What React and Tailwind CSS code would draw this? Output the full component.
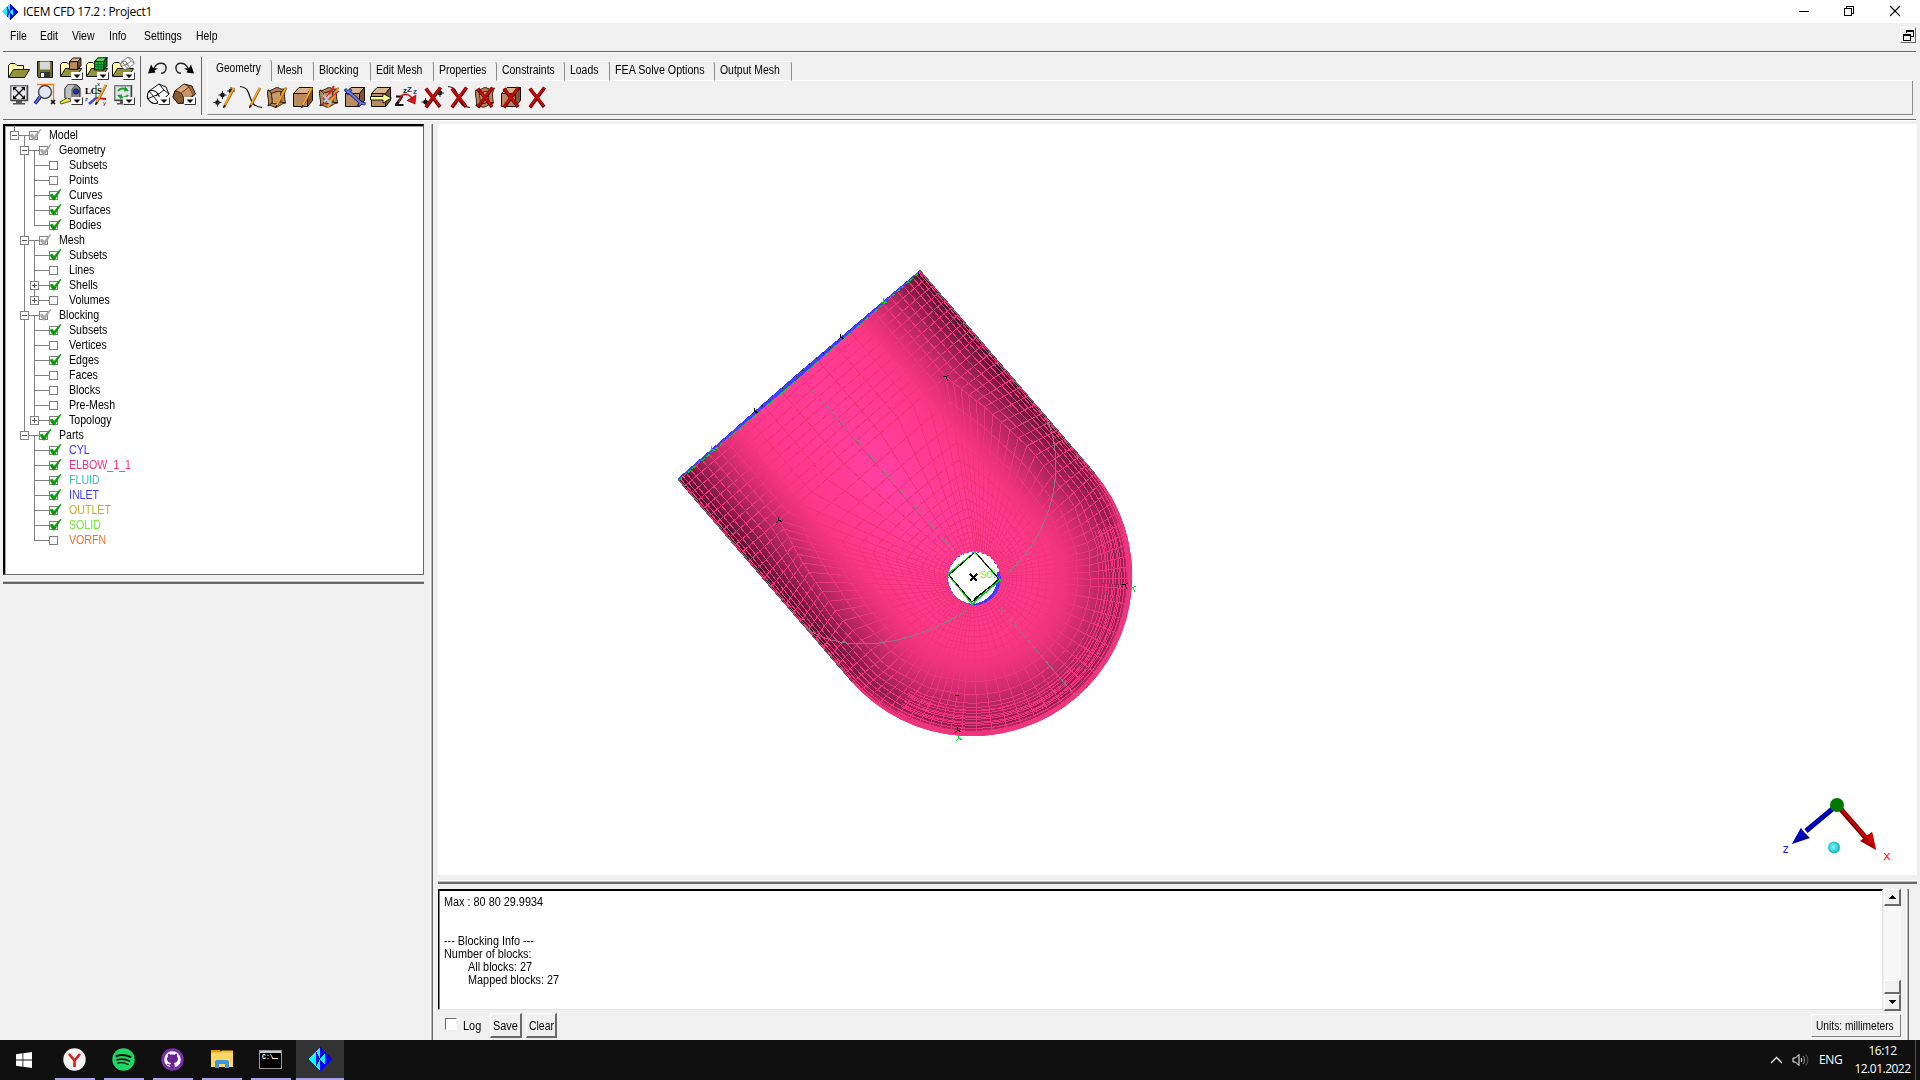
import React from "react";

/* ---------- shared bits ---------- */

function T({ children, className = "", s = "scale-x-[0.87]" }) {
  return (
    <span
      className={
        "block w-fit origin-left whitespace-pre font-['Liberation_Sans',sans-serif] text-[12px] leading-[15px] " +
        s +
        " " +
        className
      }
    >
      {children}
    </span>
  );
}

function Logo({ size }) {
  return (
    <svg width={size} height={size} viewBox="-12 -12 24 24" shapeRendering="crispEdges">
      <polygon points="-12,0 0,-12 12,0 0,12" fill="#0000ff" />
      <polygon points="-12,0 -4,-8 -4,8" fill="#00ffff" />
      <polygon points="-4,-8 0,-12 0,0" fill="#00ffff" />
      <polygon points="-4,8 0,0 0,12" fill="#00ffff" />
      <polygon points="-4,-5 0,0 -4,5" fill="#0018ff" />
      <polygon points="0,0 5,-6 5,6" fill="#00ffff" />
      <polygon points="0,-12 4,-8 0,0" fill="#0000ff" />
      <polygon points="0,12 4,8 0,0" fill="#0000ff" />
    </svg>
  );
}

/* ---------- toolbar icons (24 x 24) ---------- */

const K = "#111";
const Drop = () => (
  <g>
    <rect x="12.5" y="15.500" width="11" height="7" fill="#fff" />
    <path d="M12.500 23V15.500H23.500" stroke="#fff" fill="none" />
    <path d="M12.500 22.500H23.500V15.500" stroke="#333" fill="none" />
    <path d="M14.500 17.500H21.500L18 21Z" fill="#000" />
  </g>
);
const Folder = ({ y = 0 }) => (
  <g transform={`translate(0 ${y})`} stroke={K} strokeWidth="1">
    <path d="M1.500 19V7.500L3.500 5.500H8L10 7.500H16.500V11.500" fill="#ffffa8" />
    <path d="M1.500 19.500L6.500 11.500H22.500L17.500 19.500Z" fill="#93933a" />
  </g>
);
const Cube = ({ x = 0, y = 0, s = 1, c = "#bb8a5e", top = "#dcb48c", side = "#7e5533" }) => (
  <g transform={`translate(${x} ${y}) scale(${s})`} stroke={K} strokeWidth={1 / s}>
    <path d="M2.500 8.500H16.500V21.500H2.500Z" fill={c} />
    <path d="M2.500 8.500L8 2.500H21.500L16.500 8.500Z" fill={top} />
    <path d="M16.500 8.500L21.500 2.500V15.500L16.500 21.500Z" fill={side} />
  </g>
);
const Pencil = () => (
  <g>
    <path d="M21 3L11 22" stroke="#8a5200" strokeWidth="2.600" />
    <path d="M20.700 3L11.200 21" stroke="#f4a828" strokeWidth="1.700" />
    <path d="M12 20L10.500 23" stroke="#111" strokeWidth="1.300" />
  </g>
);
const Patch = () => (
  <g stroke="#2a1808" strokeWidth="1">
    <path d="M3 5C7 7 10 1 14 3C17 5 19 4 21.500 3C18 9 20 14 20.500 18C16 18 14 23 9 22C5 20 4 20 3 21C5 15 1 10 3 5Z" fill="#b58658" />
    <path d="M6.500 8C10 8 12 5 16 7C15 12 16 14 16 17C13 17 11 20 7 18C8 14 6 12 6.500 8Z" fill="#c99a6c" />
    <path d="M3 5L6.500 8M21 3L16 7M20.500 18L16 17M3 21L7 18" fill="none" />
  </g>
);
const Cross = () => (
  <g strokeLinecap="square">
    <path d="M6 5L18 20.500M18.500 4L6 21" stroke="#5e0000" strokeWidth="3.600" />
    <path d="M5.500 4.500L18 20M18.500 3.500L5.500 20.500" stroke="#c80808" strokeWidth="2.300" />
  </g>
);
const Wire = ({ fill = "none", line = K }) => (
  <g fill={fill} stroke={line} strokeWidth="1">
    <path d="M3 9L13 2L20 5L23 12L13 21L6 21L1 15Z" />
    <ellipse cx="7.500" cy="15" rx="5.500" ry="7" transform="rotate(-35 7.500 15)" />
    <path d="M3 9L12 20M1 17L13 12M13 2L18 8L23 12M18 8L10 14" fill="none" />
  </g>
);
const Dot = ({ x, y }) => (
  <g>
    <circle cx={x} cy={y} r="2.300" fill="#000" />
    <path d={`M${x - 4} ${y}H${x + 4}M${x} ${y - 4}V${y + 4}`} stroke="#222" strokeWidth="1" />
  </g>
);
const Monitor = () => (
  <g>
    <path d="M3.500 3.500H20.500V18.500H3.500Z" fill="#aab2bd" stroke="#777" />
    <path d="M3.500 18.500H20.500V3" stroke="#444" fill="none" strokeWidth="1.500" />
    <path d="M9 19H15V21H18V22.500H6V21H9Z" fill="#555" />
  </g>
);
const Curve = () => (
  <path d="M1 1.500C8 2 9 6 11 12C13 19 16 22 23 22.500" fill="none" stroke="#111" strokeWidth="1.200" />
);

const ICONS = {
  open: <Folder y={1} />,
  save: (
    <g>
      <path d="M4.500 4.500H19.500V20.500H5.500L4.500 19Z" fill="#6d6d2c" stroke={K} />
      <rect x="7" y="4.500" width="10" height="8" fill="#d8d8d8" />
      <rect x="7" y="15" width="10" height="6" fill="#333" />
      <rect x="8" y="16" width="3" height="4" fill="#eee" />
    </g>
  ),
  openGeo: <g><Folder /><Cube x={9} y={-0.5} s={0.6} /><Drop /></g>,
  openMesh: (
    <g>
      <Folder />
      <Cube x={8} y={-1} s={0.65} c="#18b828" top="#50e050" side="#0a7a18" />
      <path d="M13 5V13M16 5V13M10 7.500H19M10 10H19" stroke="#063" strokeWidth="0.800" />
      <Drop />
    </g>
  ),
  openBlk: <g><Folder /><g transform="translate(9 -1) scale(.62)"><Wire fill="#fff" line="#444" /></g><Drop /></g>,
  undo: (
    <g>
      <path d="M8 11C12 4 21 5 20 12C19.500 15 17 16.500 15 16" fill="none" stroke="#222" strokeWidth="1.400" />
      <path d="M2 16.500L5 7.500L7 11L12 11.500L8.500 13.500L9.500 15.500Z" fill="#000" />
    </g>
  ),
  redo: (
    <g>
      <path d="M16 11C12 4 3 5 4 12C4.500 15 7 16.500 9 16" fill="none" stroke="#222" strokeWidth="1.400" />
      <path d="M22 16.500L19 7.500L17 11L12 11.500L15.500 13.500L14.500 15.500Z" fill="#000" />
    </g>
  ),
  fit: (
    <g>
      <Monitor />
      <rect x="5" y="5" width="14" height="12" fill="#fff" opacity=".7" />
      <path d="M7 6L17 16M17 6L7 16" stroke="#000" strokeWidth="1.200" />
      <path d="M6 5H10L6 9ZM18 5H14L18 9ZM6 17H10L6 13ZM18 17H14L18 13Z" fill="#000" />
    </g>
  ),
  zoom: (
    <g>
      <path d="M4 2.500H20.500V18" fill="none" stroke="#f07818" strokeWidth="1.300" />
      <circle cx="12" cy="10" r="6.500" fill="#dfe9f4" stroke="#444" strokeWidth="1.400" />
      <path d="M7 15L2 21.500" stroke="#101080" strokeWidth="3.600" />
      <path d="M7 15L2.500 21" stroke="#5a78f0" strokeWidth="1.500" />
      <path d="M18 18L22 22M22 18L18 22" stroke="#000" strokeWidth="1.600" />
    </g>
  ),
  tape: (
    <g>
      <path d="M6 6.500L9 2.500H17L21 6V17L14 20L6 16Z" fill="#8a8a8a" stroke={K} />
      <path d="M6 6.500L9 2.500H17L13 7V17L6 16Z" fill="#c0c0c0" stroke="#555" />
      <circle cx="17" cy="9.500" r="2.600" fill="#2038c0" stroke="#112" />
      <path d="M8 16L1 20L2 22L12 19" fill="#f0e828" stroke="#333" strokeWidth=".8" />
      <Drop />
    </g>
  ),
  lcs: (
    <g>
      <path d="M11 17V3" stroke="#30a050" strokeWidth="1.500" />
      <path d="M11 16L21 17" stroke="#d01818" strokeWidth="2" />
      <path d="M11 16L4 22" stroke="#3848e0" strokeWidth="2.500" />
      <text x="0" y="12" fontSize="9" fontWeight="bold" fontFamily="Liberation Serif" fill="#000" textLength="17">LCS</text>
      <Pencil />
      <text x="0" y="19" fontSize="6" fontFamily="Liberation Sans" fill="#000">z</text>
      <text x="18" y="23" fontSize="6" fontFamily="Liberation Sans" fill="#000">y</text>
      <text x="12" y="4" fontSize="6" fontFamily="Liberation Sans" fill="#000">x</text>
    </g>
  ),
  refresh: (
    <g>
      <Monitor />
      <rect x="5" y="5" width="14" height="12" fill="#dfe6ea" />
      <path d="M7 9C9 6 13 6 15 7.500M17 13C15 16 11 16 9 14.500" stroke="#1fa02a" strokeWidth="2" fill="none" />
      <path d="M14 4.500L18 9L13 9.500ZM10 17.500L6 13L11 12.500Z" fill="#1fa02a" />
      <Drop />
    </g>
  ),
  wire: <g><Wire fill="#fff" /><Drop /></g>,
  solid: (
    <g>
      <path d="M3 9L12 2L20 4L23.500 12L13 21L6 21.500L1 15Z" fill="#a8703f" stroke={K} />
      <path d="M3 9L12 2L17 5L8 12Z" fill="#dba878" stroke="#543010" strokeWidth=".7" />
      <path d="M8 12L17 5L21 13L12 20Z" fill="#c89468" stroke="#543010" strokeWidth=".7" />
      <path d="M3 9C9 9 13 14 11 21L6 21.500L1 15Z" fill="#8a5a30" stroke={K} strokeWidth=".8" />
      <Drop />
    </g>
  ),
  gPoint: <g><Dot x={4.5} y={17.5} /><Dot x={9.5} y={10} /><Dot x={18} y={6} /><Pencil /></g>,
  gCurve: <g><Curve /><Pencil /></g>,
  gSurf: <g><Patch /><Pencil /></g>,
  gBody: <g><Cube /><Pencil /></g>,
  gFacet: (
    <g>
      <Patch />
      <path d="M21 3L11 22" stroke="#f0a020" strokeWidth="2" />
      <path d="M17 1L9 14" stroke="#d82020" strokeWidth="2" />
      <path d="M22 6L12 14L6 20" stroke="#d83030" strokeWidth="1.300" fill="none" />
      <path d="M6 10L14 19M13 10L7 17" stroke="#b8c4d8" strokeWidth="2.200" />
    </g>
  ),
  gRepair: (
    <g>
      <Cube />
      <path d="M5 6L18 18" stroke="#101850" strokeWidth="3.600" />
      <path d="M2 4L5 8L8 4M15 21L18 18L22.500 19" stroke="#101850" strokeWidth="3" fill="none" />
      <path d="M5 6L18 18" stroke="#6878f0" strokeWidth="2.200" />
      <path d="M2.500 4.500L5 7.500L7.500 4.500M16 20.500L18 18L22 19" stroke="#6878f0" strokeWidth="1.600" fill="none" />
    </g>
  ),
  gTransform: <g><Cube /><path d="M1.500 11.500H14V8.500L22.500 13L14 18V15H1.500Z" fill="#ffff90" stroke={K} /></g>,
  gRestore: (
    <g>
      <path d="M1 10.500H8V12L3.500 19H8.500V21H0V19L5 12.500H1Z" fill="#111" />
      <text x="8" y="8" fontSize="8" fontWeight="bold" fontFamily="Liberation Sans" fill="#222">z</text>
      <text x="12" y="7" fontSize="8" fontWeight="bold" fontFamily="Liberation Sans" fill="#333">Z</text>
      <text x="18" y="9" fontSize="8" fontWeight="bold" fontFamily="Liberation Sans" fill="#444">z</text>
      <path d="M4 17C5 7 13 8 17 13" fill="none" stroke="#d81818" strokeWidth="1.600" />
      <path d="M21 10L20 19L12 15.500Z" fill="#d81818" stroke="#700" strokeWidth=".6" />
    </g>
  ),
  dPoint: <g><Dot x={4.5} y={17} /><Dot x={19} y={8} /><Cross /></g>,
  dCurve: <g><Curve /><Cross /></g>,
  dSurf: <g><Patch /><Cross /></g>,
  dBody: <g><Cube /><Cross /></g>,
  dAny: <Cross />,
};

function Icon({ name }) {
  return (
    <div className="flex h-[25px] w-[26px] shrink-0 items-center justify-center">
      <svg width="24" height="24" viewBox="0 0 24 24" fill="none">
        {ICONS[name]}
      </svg>
    </div>
  );
}

const IconRow = ({ names }) => (
  <div className="flex">
    {names.map((n) => (
      <Icon key={n} name={n} />
    ))}
  </div>
);

/* ---------- title bar and menu ---------- */

function TitleBar() {
  return (
    <div className="flex h-[23px] shrink-0 items-center bg-white pl-[2px]">
      <Logo size={16} />
      <span className="ml-[5px] w-[140px] whitespace-nowrap font-['Open_Sans',sans-serif] text-[12px] leading-[20px] tracking-[-0.3px] text-black">
        ICEM CFD 17.2 : Project1
      </span>
      <svg className="ml-auto" width="140" height="22" viewBox="1780 0 140 22" fill="none" stroke="#000" shapeRendering="crispEdges">
        <path d="M1799 10.500H1809" />
        <path d="M1844.500 7.500H1851.500V14.500H1844.500ZM1846.500 7V5.500H1853.500V12.500H1852" />
        <path d="M1890 5L1900 15M1900 5L1890 15" shapeRendering="auto" strokeWidth="1.100" />
      </svg>
    </div>
  );
}

function MenuBar() {
  const items = [
    ["File", "w-[30px]"],
    ["Edit", "w-[32px]"],
    ["View", "w-[37px]"],
    ["Info", "w-[35px]"],
    ["Settings", "w-[52px]"],
    ["Help", "w-[40px]"],
  ];
  return (
    <div className="mr-[4px] ml-[3px] flex h-[30px] shrink-0 items-start border-b border-white">
      <div className="flex h-[29px] w-full items-start border-b border-[#696969] pt-[5px] pl-[7px]">
        {items.map(([t, w]) => (
          <div key={t} className={"shrink-0 pt-px " + w}>
            <T>{t}</T>
          </div>
        ))}
        <div className="-mt-[1px] ml-auto flex h-[16px] w-[16px] items-center justify-center border-t border-l border-r border-b border-t-white border-l-white border-r-[#696969] border-b-[#696969]">
          <svg width="11" height="11" fill="none" stroke="#000" shapeRendering="crispEdges">
            <path d="M3.500 3V.500H10.500V6.500H8M3.500 1.500H10.500" />
            <path d="M.500 4.500H7.500V10.500H.500ZM.500 5.500H7.500" />
          </svg>
        </div>
      </div>
    </div>
  );
}

/* ---------- toolbar ---------- */

const TABS = [
  ["Mesh", "w-[42px]"],
  ["Blocking", "w-[57px]"],
  ["Edit Mesh", "w-[63px]"],
  ["Properties", "w-[63px]"],
  ["Constraints", "w-[68px]"],
  ["Loads", "w-[45px]"],
  ["FEA Solve Options", "w-[105px]"],
  ["Output Mesh", "w-[77px]"],
];

function Toolbar() {
  return (
    <div className="mr-[4px] ml-[3px] h-[68px] shrink-0 border-b border-white">
      <div className="flex h-[67px] border-b border-[#696969]">
        <div className="mt-[3px] flex h-[51px] w-[138px] flex-col border-r border-[#696969] pl-[3px]">
          <IconRow names={["open", "save", "openGeo", "openMesh", "openBlk"]} />
          <IconRow names={["fit", "zoom", "tape", "lcs", "refresh"]} />
        </div>
        <div className="mt-[4px] flex h-[58px] w-[61px] flex-col border-r border-[#696969] pl-[4px]">
          <div className="-mt-px">
            <IconRow names={["undo", "redo"]} />
            <IconRow names={["wire", "solid"]} />
          </div>
        </div>
        <div className="mr-[3px] ml-[5px] flex flex-1 flex-col pt-[6px]">
          <div className="flex h-[22px] items-end">
            <div className="flex h-[22px] w-[65px] shrink-0 rounded-tl-[3px] rounded-tr-[4px] border-t border-r border-l border-t-white border-r-[#8a8a8a] border-l-white pt-px pl-[8px]">
              <T s="scale-x-[0.85]">Geometry</T>
            </div>
            {TABS.map(([t, w]) => (
              <div
                key={t}
                className={
                  "flex h-[20px] shrink-0 rounded-tr-[4px] border-t border-r border-b border-t-white border-r-[#8a8a8a] border-b-white pt-px pl-[5px] " + w
                }
              >
                <T s={t.length > 11 ? "scale-x-[0.89]" : "scale-x-[0.87]"}>{t}</T>
              </div>
            ))}
            <div className="h-px flex-1 bg-white" />
          </div>
          <div className="h-[34px] border-r border-b border-l border-r-[#8a8a8a] border-b-[#8a8a8a] border-l-white pt-[3px] pl-[4px]">
            <IconRow
              names={["gPoint", "gCurve", "gSurf", "gBody", "gFacet", "gRepair", "gTransform", "gRestore", "dPoint", "dCurve", "dSurf", "dBody", "dAny"]}
            />
          </div>
        </div>
      </div>
    </div>
  );
}

/* ---------- model tree ---------- */

// [depth, label, state, expander, colour]
const TREE = [
  [0, "Model", "g", "-"],
  [1, "Geometry", "g", "-"],
  [2, "Subsets", ""],
  [2, "Points", ""],
  [2, "Curves", "c"],
  [2, "Surfaces", "c"],
  [2, "Bodies", "c"],
  [1, "Mesh", "g", "-"],
  [2, "Subsets", "c"],
  [2, "Lines", ""],
  [2, "Shells", "c", "+"],
  [2, "Volumes", "", "+"],
  [1, "Blocking", "g", "-"],
  [2, "Subsets", "c"],
  [2, "Vertices", ""],
  [2, "Edges", "c"],
  [2, "Faces", ""],
  [2, "Blocks", ""],
  [2, "Pre-Mesh", ""],
  [2, "Topology", "c", "+"],
  [1, "Parts", "c", "-"],
  [2, "CYL", "c", "", "text-[#4236f5]"],
  [2, "ELBOW_1_1", "c", "", "text-[#ee2f7b]"],
  [2, "FLUID", "c", "", "text-[#2fc4b4]"],
  [2, "INLET", "c", "", "text-[#3d3df5]"],
  [2, "OUTLET", "c", "", "text-[#c8ab2c]"],
  [2, "SOLID", "c", "", "text-[#70e838]"],
  [2, "VORFN", "", "", "text-[#f07030]"],
];

const GUTTER = [43, 53, 63];

function TreeRow({ row, index }) {
  const [d, label, state, exp, color = "text-black"] = row;
  const next = TREE[index + 1];
  const cx = 8.5 + d * 10;
  const bx = d === 2 ? 43.5 : 23.5 + d * 10;
  const lines = [];
  if (d === 0) lines.push("M8.500 0V8M18.500 8V15", "M8 8.500H24");
  if (d === 1) {
    lines.push("M18.500 0V" + (label === "Parts" ? 8 : 15), "M18 8.500H34", "M28.500 8V15");
  }
  if (d === 2) {
    if (index < 20) lines.push("M18.500 0V15");
    lines.push("M28.500 0V" + (next && next[0] === 2 ? 15 : 8), "M28 8.500H43");
  }
  return (
    <div className="flex h-[15px] items-center">
      <svg className="shrink-0" width={GUTTER[d]} height="15" fill="none" shapeRendering="crispEdges" overflow="visible">
        <path d={lines.join("")} stroke="#808080" />
        {exp ? (
          <g>
            <rect x={cx - 4} y="4.500" width="8" height="8" fill="#fff" stroke="#808080" />
            <path d={`M${cx - 2.5} 8.500H${cx + 2.5}` + (exp === "+" ? `M${cx} 6V11` : "")} stroke="#555" />
          </g>
        ) : null}
        <rect x={bx} y="4.500" width="8" height="8" fill="#fff" stroke="#808080" />
        {state ? (
          <path
            transform={`translate(${bx} 0)`}
            d="M.5 8L3 7L4.500 9.500L10.500 2.500H11.500L5 13H3.500Z"
            fill={state === "c" ? "#089808" : "#a8a8a8"}
            stroke={state === "c" ? "#089808" : "#a8a8a8"}
            strokeWidth=".7"
            shapeRendering="auto"
          />
        ) : null}
      </svg>
      <T s="scale-x-[0.885]" className={"pt-[2px] " + color}>{label}</T>
    </div>
  );
}

function Sidebar() {
  return (
    <div className="flex w-[427px] shrink-0 flex-col pl-[3px]">
      <div className="h-[451px] w-[421px] border-t-2 border-r border-b border-l-2 border-t-black border-r-[#696969] border-b-[#696969] border-l-black bg-white">
        <div className="h-full border-t border-l border-[#a0a0a0]">
          {TREE.map((r, i) => (
            <TreeRow key={i} row={r} index={i} />
          ))}
        </div>
      </div>
      <div className="mt-[5px] h-[4px] w-[421px] border-t border-b-2 border-t-white border-b-[#696969] bg-[#c0c0c0]" />
    </div>
  );
}

/* ---------- viewport drawing ---------- */

const CX = 973.2, CY = 577.3, R = 160, LEN = 267, HOLE = 26;
const UX = 0.6524, UY = 0.7578;
const P = (u, v) => [CX + u * UX + v * UY, CY + u * UY - v * UX];
const path = (pts) => "M" + pts.map(([x, y]) => x.toFixed(1) + " " + y.toFixed(1)).join("L");
const lerp = (a, b, t) => a + (b - a) * t;
const onHole = (a) => [HOLE * Math.cos(a), HOLE * Math.sin(a)];

// Walks one side of the mesh from the rear block corner to the 45 degree point of the dome.
function sidePoint(t, sign) {
  const x = [-170, -120, -60, 10, 55, 83];
  const y = [110, 120, 127, 124, 106, 83];
  const f = t * 5, i = Math.min(4, Math.floor(f));
  return [lerp(x[i], x[i + 1], f - i), sign * lerp(y[i], y[i + 1], f - i)];
}
function rimSide(t, sign) {
  const s = t * (170 + (R * Math.PI) / 4);
  if (s < 170) return [-170 + s, sign * R];
  const a = (s - 170) / R;
  return [R * Math.sin(a), sign * R * Math.cos(a)];
}

function buildMesh() {
  const out = [];
  const vs = [0, 24, 47, 67, 84, 98, 110];
  const back = [...vs.slice(1).reverse().map((v) => -v), ...vs];
  const spokes = back.map((v, i) => ({
    in: onHole(Math.PI * (1.25 - (0.5 * i) / (back.length - 1))),
    k: [-170, v],
  }));
  const NS = 26, NF = 16;
  for (let i = 1; i <= NS; i++) {
    const t = i / NS;
    spokes.push({ in: onHole(Math.PI * (0.75 - 0.5 * t)), k: sidePoint(t, 1), rim: rimSide(t, 1) });
  }
  for (let i = 1; i <= NF; i++) {
    const a = Math.PI * (0.25 - (0.5 * i) / NF);
    spokes.push({
      in: onHole(a),
      k: [117.4 * Math.cos(a), 117.4 * Math.sin(a)],
      rim: [R * Math.cos(a), R * Math.sin(a)],
    });
  }
  for (let i = NS - 1; i >= 0; i--) {
    const t = i / NS;
    spokes.push({ in: onHole(-Math.PI * (0.75 - 0.5 * t)), k: sidePoint(t, -1), rim: rimSide(t, -1) });
  }
  // spokes and rings around the hole
  spokes.forEach((s) => out.push(path([P(...s.in), P(...s.k)])));
  const NR = 15, g = 1.14, tot = Math.pow(g, NR) - 1;
  for (let r = 0; r <= NR; r++) {
    const t = (Math.pow(g, r) - 1) / tot;
    out.push(path(spokes.map((s) => P(lerp(s.in[0], s.k[0], t), lerp(s.in[1], s.k[1], t)))));
  }
  // outer strip
  const strip = spokes.filter((s) => s.rim);
  strip.forEach((s) => out.push(path([P(...s.k), P(...s.rim)])));
  const th0 = Math.asin(110 / R), NO = 9;
  for (let r = 1; r <= NO; r++) {
    const th = lerp(th0, Math.PI / 2, r / NO);
    const t = (Math.sin(th) - Math.sin(th0)) / (1 - Math.sin(th0));
    out.push(path([
      P(-LEN, R * Math.sin(th)),
      P(-170, R * Math.sin(th)),
      ...strip.map((s) => P(lerp(s.k[0], s.rim[0], t), lerp(s.k[1], s.rim[1], t))),
      P(-170, -R * Math.sin(th)),
      P(-LEN, -R * Math.sin(th)),
    ]));
  }
  // the front of the dome is meshed more finely than the sides
  for (let r = 130; r < 155; r += 3) {
    const pts = [];
    for (let a = -70; a <= 70; a += 4) {
      const k = (a * Math.PI) / 180;
      pts.push(P(r * Math.cos(k), r * Math.sin(k)));
    }
    out.push(path(pts));
  }
  // straight pipe part
  back.forEach((v) => out.push(path([P(-LEN, v), P(-170, v)])));
  for (let i = 1; i <= 10; i++) {
    const u = -LEN + (i * 97) / 10;
    out.push(path([P(u, -R), P(u, R)]));
  }
  return out.join("");
}

function denseRim() {
  const out = [];
  for (let r = 154.5; r < 160; r += 1) {
    const pts = [];
    for (let a = -90; a <= 90; a += 3) {
      const k = (a * Math.PI) / 180;
      const rr = r + (R - r) * Math.pow(Math.abs(a) / 90, 3);
      pts.push(P(rr * Math.cos(k), rr * Math.sin(k)));
    }
    out.push(path(pts));
  }
  return out.join("");
}

const MESH = buildMesh();
const RIM = denseRim();
const STOPS = [
  [0, "#ff3c96"], [0.35, "#ff3a8e"], [0.5, "#f93683"], [0.63, "#dc2f73"],
  [0.76, "#b42760"], [0.87, "#8b1e4b"], [0.95, "#661538"], [1, "#3c0c22"],
];
const FRONT = [
  [0, "#ff3a92"], [0.4, "#fd3888"], [0.58, "#ee337d"], [0.72, "#ce2d6d"],
  [0.84, "#ab255c"], [0.93, "#922050"], [1, "#ee337a"],
];

function Tick({ x, y, c = "#000", r = 0 }) {
  return <path transform={`translate(${x} ${y}) rotate(${r})`} d="M-1 -3L0 0L-3 3M0 0L3 2" stroke={c} fill="none" />;
}

function Viewport() {
  const [ax, ay] = P(-LEN, -R), [bx, by] = P(-LEN, R), [c1x, c1y] = P(0, R), [c2x, c2y] = P(0, -R);
  const [mx, my] = P(-LEN, 0);
  const body = `M${ax} ${ay}L${bx} ${by}L${c1x} ${c1y}A${R} ${R} 0 0 1 ${c2x} ${c2y}Z`;
  const hole = `M${CX - 25} ${CY}a26 26 0 1 0 52 0a26 26 0 1 0 -52 0Z`;
  const deg = (Math.atan2(UY, UX) * 180) / Math.PI;
  return (
    <svg className="block bg-white" width="1479" height="751" viewBox="438 124 1479 751" shapeRendering="crispEdges" fill="none">
      <defs>
        <linearGradient id="pipe" x1="0" x2="0" y1="-160" y2="160" gradientUnits="userSpaceOnUse">
          {[...STOPS].reverse().map(([o, c]) => <stop key={"a" + o} offset={0.5 - o / 2} stopColor={c} />)}
          {STOPS.map(([o, c]) => <stop key={"b" + o} offset={0.5 + o / 2} stopColor={c} />)}
        </linearGradient>
        <radialGradient id="dome" cx="0" cy="0" r="160" gradientUnits="userSpaceOnUse">
          {FRONT.map(([o, c]) => <stop key={o} offset={o} stopColor={c} />)}
        </radialGradient>
        <linearGradient id="blend" x1="-50" x2="50" y1="0" y2="0" gradientUnits="userSpaceOnUse">
          <stop offset="0" stopColor="#fff" stopOpacity="0" />
          <stop offset="1" stopColor="#fff" />
        </linearGradient>
        <radialGradient id="glow" cx="-130" cy="0" r="150" gradientUnits="userSpaceOnUse" gradientTransform="scale(1 .42)">
          <stop offset="0" stopColor="#ff42a8" stopOpacity=".8" />
          <stop offset="1" stopColor="#ff3c96" stopOpacity="0" />
        </radialGradient>
        <mask id="fade" maskUnits="userSpaceOnUse" x="-60" y="-170" width="240" height="340">
          <rect x="-60" y="-170" width="240" height="340" fill="url(#blend)" />
        </mask>
        <clipPath id="shell"><path clipRule="evenodd" d={body + hole} /></clipPath>
        <radialGradient id="ball" cx=".45" cy=".45" r=".55">
          <stop offset="0" stopColor="#80ffff" />
          <stop offset="1" stopColor="#10b0b8" />
        </radialGradient>
      </defs>
      <g clipPath="url(#shell)">
        <g transform={`translate(${CX} ${CY}) rotate(${deg})`}>
          <rect x="-268" y="-161" width="430" height="322" fill="url(#pipe)" />
          <rect x="-60" y="-161" width="222" height="322" fill="url(#dome)" mask="url(#fade)" />
          <rect x="-268" y="-100" width="330" height="200" fill="url(#glow)" />
        </g>
        <path d={MESH} stroke="#ef347c" />
        <path d={RIM} stroke="#f0357d" strokeWidth="1.300" />
        <path d="M812 390L955 552M1000 608L1075 695" stroke="#8a7c80" strokeDasharray="5 2" />
        <path d="M1045 415C1060 445 1059 485 1045 520C1035 545 1022 560 1008 573M967 610C930 635 870 655 822 637C812 633 806 628 800 623" stroke="#8a7c80" />
      </g>
      <path d={`M${bx} ${by}L${c1x} ${c1y}M${ax} ${ay}L${c2x} ${c2y}`} stroke="#6e5a62" />
      <path d={`M${ax} ${ay}L${mx - 1} ${my - 1}L${bx} ${by}L${mx + 1} ${my + 1}Z`} stroke="#4040ff" strokeWidth="1.300" fill="#4040ff" />
      <path d={`M${ax + 1} ${ay + 1}L${mx + 1.5} ${my + 2}L${bx} ${by + 1}`} stroke="#00d820" strokeDasharray="4 2" />
      <path d="M755 412L842 337" stroke="#222" strokeDasharray="1 8" strokeWidth="1.500" />
      <Tick x={712} y={449} c="#00e020" />
      <Tick x={884} y={301} c="#00e020" />
      <Tick x={755} y={411} />
      <Tick x={841} y={337} />
      <Tick x={946} y={377} r={-70} />
      <Tick x={779} y={520} />
      <Tick x={1125} y={585} r={-70} />
      <Tick x={1133} y={588} c="#00e020" r={-70} />
      <Tick x={958} y={730} />
      <Tick x={959} y={738} c="#00e020" />
      <path d="M955 695.500H959" stroke="#000" />
      {/* opening with the inner block */}
      <circle cx="974" cy="578" r="26" fill="#fff" />
      <path d="M1000 573A26.500 26.500 0 0 1 965 603.500A27 27 0 0 0 997 572Z" fill="#4038ff" />
      <circle cx="974" cy="578" r="26" stroke="#5a50ff" strokeDasharray="2 3" />
      <text x="980" y="578" fontSize="11" fontFamily="Liberation Mono, monospace" fill="#7ee83c" textLength="19">SOL</text>
      <path d="M975 552L948 574L972 604L1000 580Z" stroke="#00e010" strokeWidth="1.500" />
      <path d="M974 553L949 575L972 602L999 579L976 553M974 599L996 582" stroke="#0a1a0a" />
      <path d="M970 574L977 581M977 574L970 581" stroke="#000" strokeWidth="1.600" />
      {/* axis triad */}
      <g shapeRendering="auto">
        <path d="M1836 806L1806 831" stroke="#00006a" strokeWidth="5" />
        <path d="M1836 805.500L1806 830.500" stroke="#0000d8" strokeWidth="2.500" />
        <path d="M1792 844L1801 828L1804 832L1810 838Z" fill="#0000a0" />
        <path d="M1792 844L1801 828L1804 833Z" fill="#0000d0" />
        <path d="M1838 806L1866 838" stroke="#600" strokeWidth="5" />
        <path d="M1838.500 806L1866 837.500" stroke="#d80000" strokeWidth="2.500" />
        <path d="M1876 850L1860 841L1865 837L1872 832Z" fill="#a80000" />
        <path d="M1876 850L1867 837L1872 832Z" fill="#d80000" />
        <circle cx="1837" cy="805" r="7" fill="#007800" />
        <circle cx="1834" cy="847.500" r="6" fill="url(#ball)" />
      </g>
      <text x="1782" y="853" fontSize="12" fontFamily="DejaVu Sans Mono, monospace" fill="#2020ff">z</text>
      <text x="1883" y="860" fontSize="13" fontFamily="DejaVu Sans Mono, monospace" fill="#ff2020">x</text>
    </svg>
  );
}

/* ---------- message area ---------- */

const RAISED = "border-t border-l border-r-2 border-b-2 border-t-white border-l-white border-r-[#696969] border-b-[#696969] bg-[#f0f0f0]";

function ScrollButton({ up }) {
  return (
    <div className={"flex h-[17px] w-[17px] shrink-0 items-center justify-center " + RAISED}>
      <svg width="8" height="4" shapeRendering="crispEdges">
        <path d={up ? "M0 4L4 0L8 4Z" : "M0 0L4 4L8 0Z"} fill="#000" />
      </svg>
    </div>
  );
}

const LOG_LINES = [
  [0, "Max : 80 80 29.9934"],
  [0, ""],
  [0, ""],
  [0, "--- Blocking Info ---"],
  [0, "Number of blocks:"],
  [1, "All blocks: 27"],
  [1, "Mapped blocks: 27"],
];

function Messages() {
  return (
    <div className="flex h-[151px]">
      <div className="flex w-[1463px] flex-col">
        <div className="flex h-[122px]">
          <div className="h-[121px] w-[1445px] border-t-2 border-r border-b border-l border-t-black border-r-[#e3e3e3] border-b-[#e3e3e3] border-l-black bg-white">
            <div className="flex h-full flex-col border-l border-[#808080] pt-[4px] pl-[4px]">
              {LOG_LINES.map(([indent, l], i) => (
                <div key={i} className={"h-[13px] " + (indent ? "pl-[24px]" : "")}>
                  <T s="scale-x-[0.905]">{l}</T>
                </div>
              ))}
            </div>
          </div>
          <div className="ml-px flex h-[122px] w-[17px] flex-col bg-[#f7f7f7]">
            <ScrollButton up />
            <div className="flex-1" />
            <div className={"h-[14px] " + RAISED} />
            <ScrollButton />
          </div>
        </div>
        <div className="flex h-[29px] items-start pt-[2px] pl-[7px]">
          <div className="mt-[5px] h-[12px] w-[12px] border border-t-[#696969] border-r-white border-b-white border-l-[#696969] bg-white" />
          <div className="mt-[6px] ml-[6px] w-[27px]">
            <T s="scale-x-[0.91]">Log</T>
          </div>
          <div className={"flex h-[25px] w-[32px] items-center pt-[2px] pl-[2px] " + RAISED}>
            <div className="w-[26px]"><T s="scale-x-[0.91]">Save</T></div>
          </div>
          <div className={"ml-[4px] flex h-[25px] w-[31px] items-center pt-[2px] pl-[2px] " + RAISED}>
            <div className="w-[26px]"><T>Clear</T></div>
          </div>
          <div className="mt-px ml-auto flex h-[23px] w-[90px] items-center border border-t-white border-r-[#808080] border-b-[#808080] border-l-white pt-px pl-[4px]">
            <div className="w-[78px]"><T s="scale-x-[0.85]">Units: millimeters</T></div>
          </div>
        </div>
      </div>
      <div className="ml-[5px] w-[3px] border-r border-l border-r-[#696969] border-l-white bg-[#b0b0b0]" />
    </div>
  );
}

/* ---------- taskbar ---------- */

function TaskItem({ children, active }) {
  return (
    <div
      className={
        "flex shrink-0 flex-col items-center justify-end " + (active ? "w-[48px] bg-[#333]" : "w-[49px]")
      }
    >
      <div className="flex flex-1 items-center justify-center">{children}</div>
      <div className={"h-[2px] bg-[#a8a4f0] " + (active ? "w-[48px]" : "w-[40px]")} />
    </div>
  );
}

function Taskbar() {
  return (
    <div className="flex h-[40px] shrink-0 bg-[#101010] text-white">
      <div className="flex w-[50px] items-center pl-[16px]">
        <svg width="16" height="16" fill="#fff"><path d="M0 2.300L6.500 1.300V7.500H0ZM7.300 1.200L16 0V7.500H7.300ZM0 8.500H6.500V14.700L0 13.700ZM7.300 8.500H16V16L7.300 14.800Z" /></svg>
      </div>
      <TaskItem>
        <svg width="23" height="23" viewBox="0 0 23 23"><circle cx="11.500" cy="11.500" r="11.200" fill="#f2f2f2" /><path d="M6 6L11.500 12.500L17 6M11.500 12V19" stroke="#d81e1e" strokeWidth="2.600" fill="none" /></svg>
      </TaskItem>
      <TaskItem>
        <svg width="23" height="23" viewBox="0 0 23 23" fill="none" stroke="#101010" strokeLinecap="round"><circle cx="11.500" cy="11.500" r="11.200" fill="#1ed760" stroke="none" /><path d="M4.500 8C9 6.500 14.500 7 18.500 9" strokeWidth="2" /><path d="M5 11.800C9 10.600 13.500 11 17.300 13" strokeWidth="1.700" /><path d="M5.700 15.200C9 14.200 12.800 14.600 16 16.300" strokeWidth="1.400" /></svg>
      </TaskItem>
      <TaskItem>
        <svg width="23" height="23" viewBox="0 0 23 23"><circle cx="11.500" cy="11.500" r="11.200" fill="#7a2ea8" /><circle cx="11.500" cy="11.500" r="8.300" fill="#fff" /><path d="M9.300 20V17.500C7 18 6.500 16.500 5.500 15.800C7.500 15.500 7.500 17 9.400 16.300C9.500 15.600 9.800 15.200 10 15C7.500 14.700 6 13.500 6 10.800C6 9.700 6.400 8.900 7 8.200C6.800 7.500 6.800 6.500 7.200 5.700C8.200 5.700 9 6.300 9.500 6.700C10.800 6.400 12.200 6.400 13.500 6.700C14 6.300 14.800 5.700 15.800 5.700C16.200 6.500 16.200 7.500 16 8.200C16.600 8.900 17 9.700 17 10.800C17 13.500 15.500 14.700 13 15C13.400 15.400 13.700 16 13.700 17V20Z" fill="#6a2594" /></svg>
      </TaskItem>
      <TaskItem>
        <svg width="22" height="20" viewBox="0 0 22 20"><path d="M0 1H9L10 3H0Z" fill="#e39b0a" /><path d="M0 3H22V18H0Z" fill="#ffd766" /><path d="M0 3H9L11 1.500H22V4H0Z" fill="#f5c040" /><path d="M4 19V12.500L5.500 11H16.500L18 12.500V19H14V15H8V19Z" fill="#3c96e0" /></svg>
      </TaskItem>
      <TaskItem>
        <svg width="23" height="19" viewBox="0 0 23 19"><rect x=".5" y=".5" width="22" height="18" fill="#000" stroke="#999" /><rect x="1" y="1" width="21" height="2" fill="#c8ccd0" /><text x="3" y="9" fontSize="6.500" fontWeight="bold" fill="#fff" fontFamily="Liberation Mono">C:\</text><path d="M13 8.500H19" stroke="#fff" /></svg>
      </TaskItem>
      <div className="w-px" />
      <TaskItem active>
        <Logo size={24} />
      </TaskItem>
      <div className="ml-auto flex h-[40px] items-center font-['Open_Sans',sans-serif] text-[12px]">
        <svg width="13" height="8" fill="none" stroke="#fff" strokeWidth="1.300"><path d="M1 7L6.500 1.500L12 7" /></svg>
        <svg className="ml-[9px]" width="18" height="14" fill="none" stroke="#fff"><path d="M1 5H3.500L7 1.500V12.500L3.500 9H1Z" /><path d="M9 5C10 6 10 8 9 9" /><path d="M11 3C13 5 13 9 11 11" stroke="#999" /><path d="M13.500 1.500C16.500 4.500 16.500 9.500 13.500 12.500" stroke="#666" /></svg>
        <span className="ml-[9px] w-[27px] whitespace-nowrap tracking-[-0.3px]">ENG</span>
        <div className="flex w-[72px] flex-col items-center pl-px leading-[18px] tracking-[-0.5px]">
          <span>16:12</span>
          <span>12.01.2022</span>
        </div>
        <div className="ml-[-3px] h-[40px] w-[5px] border-l border-[#555]" />
      </div>
    </div>
  );
}

export default function App() {
  return (
    <div className="flex h-[1080px] w-[1920px] flex-col overflow-hidden bg-[#f0f0f0] text-black">
      <TitleBar />
      <MenuBar />
      <Toolbar />
      <div className="flex h-[919px] shrink-0 pt-[3px]">
        <Sidebar />
        <div className="ml-[3px] w-[3px] border-r border-l border-r-[#696969] border-l-white bg-[#b0b0b0]" />
        <div className="ml-[5px] flex w-[1479px] flex-col">
          <div className="h-[751px]">
            <Viewport />
          </div>
          <div className="mt-[5px] mb-[5px] h-[4px] border-t border-b-2 border-t-white border-b-[#696969] bg-[#c0c0c0]" />
          <Messages />
        </div>
      </div>
      <Taskbar />
    </div>
  );
}
